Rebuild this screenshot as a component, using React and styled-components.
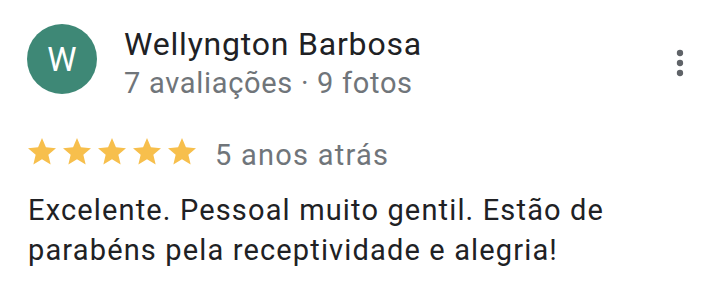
import * as React from "react";
import styled, { createGlobalStyle } from "styled-components";

const GlobalStyle = createGlobalStyle`
  html, body {
    margin: 0;
    padding: 0;
    background: #ffffff;
  }
  body {
    font-family: Roboto, "Noto Sans", Arial, sans-serif;
  }
`;

const Card = styled.article`
  width: 728px;
  height: 300px;
  box-sizing: border-box;
  padding: 24px 28px 0 27px;
  color: #202124;
`;

const Header = styled.header`
  display: flex;
  align-items: flex-start;
`;

const Avatar = styled.div`
  flex: none;
  width: 70px;
  height: 70px;
  border-radius: 50%;
  background: #3e8876;
  color: #ffffff;
  display: flex;
  align-items: center;
  justify-content: center;
  font-size: 33px;
  line-height: 1;
`;

const Who = styled.div`
  margin-left: 27px;
  display: flex;
  flex-direction: column;
  padding-top: 2px;
`;

const Name = styled.div`
  font-size: 32px;
  line-height: 36px;
  letter-spacing: 0.8px;
  color: #202124;
`;

const Meta = styled.div`
  margin-top: 4px;
  font-size: 29px;
  line-height: 34px;
  letter-spacing: 0.7px;
  color: #70757a;
`;

const MenuButton = styled.button`
  margin-left: auto;
  margin-top: 19px;
  width: 40px;
  height: 40px;
  padding: 0;
  border: none;
  background: none;
  display: flex;
  align-items: center;
  justify-content: center;
  cursor: pointer;
`;

const RatingRow = styled.div`
  display: flex;
  align-items: baseline;
  margin-top: 38px;
  margin-left: 1px;
`;

const Stars = styled.div`
  display: flex;
  align-items: baseline;
  gap: 7px;
`;

const When = styled.span`
  margin-left: 19px;
  font-size: 29px;
  line-height: 32px;
  letter-spacing: 1.25px;
  color: #70757a;
`;

const Body = styled.p`
  margin: 19px 0 0 1px;
  font-size: 29px;
  line-height: 40px;
  letter-spacing: 1.15px;
  color: #202124;
  max-width: 640px;
`;

const Star = () => (
  <svg width="28" height="27" viewBox="2 2 20 19.3" aria-hidden="true">
    <path
      fill="#f7bf4c"
      d="M12 17.27L18.18 21l-1.64-7.03L22 9.24l-7.19-.61L12 2 9.19 8.63 2 9.24l5.46 4.73L5.82 21z"
    />
  </svg>
);

const MoreIcon = () => (
  <svg width="40" height="40" viewBox="0 0 24 24" aria-hidden="true">
    <circle cx="12" cy="6" r="1.9" fill="#5f6368" />
    <circle cx="12" cy="12" r="1.9" fill="#5f6368" />
    <circle cx="12" cy="18" r="1.9" fill="#5f6368" />
  </svg>
);

const App = () => {
  return (
    <>
      <GlobalStyle />
      <Card>
        <Header>
          <Avatar>W</Avatar>
          <Who>
            <Name>Wellyngton Barbosa</Name>
            <Meta>7 avaliações · 9 fotos</Meta>
          </Who>
          <MenuButton aria-label="Mais opções">
            <MoreIcon />
          </MenuButton>
        </Header>
        <RatingRow>
          <Stars>
            {[0, 1, 2, 3, 4].map((i) => (
              <Star key={i} />
            ))}
          </Stars>
          <When>5 anos atrás</When>
        </RatingRow>
        <Body>Excelente. Pessoal muito gentil. Estão de parabéns pela receptividade e alegria!</Body>
      </Card>
    </>
  );
};

export default App;
